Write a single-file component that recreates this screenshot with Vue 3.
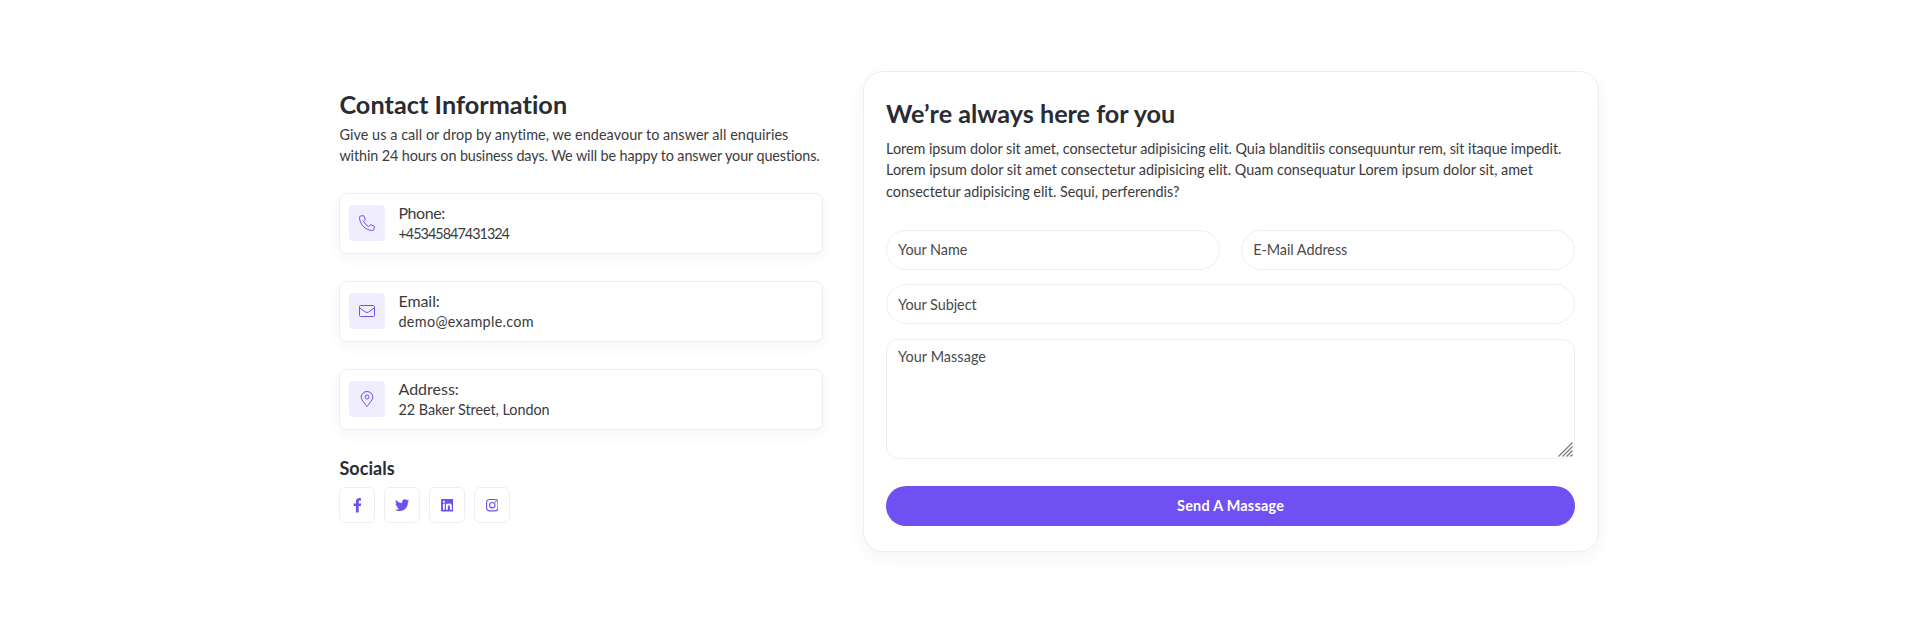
<script setup>
const contacts = [
  { icon: 'phone', label: 'Phone:', value: '+45345847431324' },
  { icon: 'email', label: 'Email:', value: 'demo@example.com' },
  { icon: 'address', label: 'Address:', value: '22 Baker Street, London' },
]

const socials = [
  {
    name: 'facebook',
    box: '0 0 320 512',
    path: 'M279.14 288l14.22-92.66h-88.91v-60.13c0-25.35 12.42-50.06 52.24-50.06h40.42V6.26S260.43 0 225.36 0c-73.22 0-121.08 44.38-121.08 124.72v70.62H22.89V288h81.39v224h100.17V288z',
  },
  {
    name: 'twitter',
    box: '0 0 512 512',
    path: 'M459.37 151.716c.325 4.548.325 9.097.325 13.645 0 138.72-105.583 298.558-298.558 298.558-59.452 0-114.68-17.219-161.137-47.106 8.447.974 16.568 1.299 25.34 1.299 49.055 0 94.213-16.568 130.274-44.832-46.132-.975-84.792-31.188-98.112-72.772 6.498.974 12.995 1.624 19.818 1.624 9.421 0 18.843-1.3 27.614-3.573-48.081-9.747-84.143-51.98-84.143-102.985v-1.299c13.969 7.797 30.214 12.67 47.431 13.319-28.264-18.843-46.781-51.005-46.781-87.391 0-19.492 5.197-37.36 14.294-52.954 51.655 63.675 129.3 105.258 216.365 109.807-1.624-7.797-2.599-15.918-2.599-24.04 0-57.828 46.782-104.934 104.934-104.934 30.213 0 57.502 12.67 76.67 33.137 23.715-4.548 46.456-13.32 66.599-25.34-7.798 24.366-24.366 44.833-46.132 57.827 21.117-2.273 41.584-8.122 60.426-16.243-14.292 20.791-32.161 39.308-52.628 54.253z',
  },
  {
    name: 'linkedin',
    box: '0 0 448 512',
    path: 'M416 32H31.9C14.3 32 0 46.5 0 64.3v383.4C0 465.5 14.3 480 31.9 480H416c17.6 0 32-14.5 32-32.3V64.3c0-17.8-14.4-32.3-32-32.3zM135.4 416H69V202.2h66.5V416zm-33.2-243c-21.3 0-38.5-17.3-38.5-38.5S80.9 96 102.2 96c21.2 0 38.5 17.3 38.5 38.5 0 21.3-17.2 38.5-38.5 38.5zm282.1 243h-66.4V312c0-24.8-.5-56.7-34.5-56.7-34.6 0-39.9 27-39.9 54.9V416h-66.4V202.2h63.7v29.2h.9c8.9-16.8 30.6-34.5 62.9-34.5 67.2 0 79.7 44.3 79.7 101.9V416z',
  },
  { name: 'instagram', box: '0 0 448 512' },
]
</script>

<template>
  <main class="page">
    <section class="info">
      <h2 class="title info-title">Contact Information</h2>
      <p class="text">
        <span class="line i1">Give us a call or drop by anytime, we endeavour to answer all enquiries</span>
        <span class="line i2">within 24 hours on business days. We will be happy to answer your questions.</span>
      </p>
      <div class="contacts">
        <div v-for="c in contacts" :key="c.icon" class="contact">
          <div class="badge">
            <svg v-if="c.icon === 'phone'" class="line-icon" viewBox="0 0 16 16">
              <path d="M4 .6 1.3 1.2Q.5 1.4 .5 2.2C.5 9.5 6.5 15.5 13.8 15.5Q14.6 15.5 14.8 14.7L15.4 12Q15.6 11.3 14.9 11L11.9 9.8Q11.3 9.6 10.9 10.1L9.7 11.6Q6.2 9.9 4.4 6.3L5.9 5.1Q6.4 4.7 6.2 4.1L5 1.1Q4.7 .5 4 .6Z" />
            </svg>
            <svg v-else-if="c.icon === 'email'" class="line-icon" viewBox="0 0 16 16">
              <rect x=".5" y="2.5" width="15" height="11" rx="1" />
              <path d="M.5 4.8 6.4 9Q8 10 9.6 9L15.5 4.8" />
            </svg>
            <svg v-else class="line-icon" viewBox="0 0 16 16">
              <path d="M8 15.5C6 12.9 2.2 8.7 2.2 6.2a5.8 5.7 0 0 1 11.6 0C13.8 8.7 10 12.9 8 15.5Z" />
              <circle cx="8" cy="6" r="2" />
            </svg>
          </div>
          <div class="detail">
            <div class="label" :class="c.icon">{{ c.label }}</div>
            <div class="value" :class="c.icon">{{ c.value }}</div>
          </div>
        </div>
      </div>
      <h3 class="subtitle">Socials</h3>
      <div class="socials">
        <a v-for="s in socials" :key="s.name" class="social">
          <svg :viewBox="s.box" class="brand">
            <path v-if="s.path" :d="s.path" />
            <template v-else>
              <rect class="ring" x="20" y="52" width="408" height="408" rx="112" />
              <circle class="ring" cx="224" cy="256" r="95" />
              <circle cx="343" cy="137" r="27" />
            </template>
          </svg>
        </a>
      </div>
    </section>

    <section class="panel">
      <h2 class="title panel-title">We’re always here for you</h2>
      <p class="text">
        <span class="line p1">Lorem ipsum dolor sit amet, consectetur adipisicing elit. Quia blanditiis consequuntur rem, sit itaque impedit.</span>
        <span class="line p2">Lorem ipsum dolor sit amet consectetur adipisicing elit. Quam consequatur Lorem ipsum dolor sit, amet</span>
        <span class="line p3">consectetur adipisicing elit. Sequi, perferendis?</span>
      </p>
      <form class="form" @submit.prevent>
        <div class="pair">
          <input class="field" type="text" placeholder="Your Name" />
          <input class="field" type="text" placeholder="E-Mail Address" />
        </div>
        <input class="field" type="text" placeholder="Your Subject" />
        <div class="area-wrap">
          <textarea class="field area" placeholder="Your Massage"></textarea>
          <svg class="grip" viewBox="0 0 15 15">
            <path d="M.5 14.5 14.5 .5M4.5 14.5l10-10M8.5 14.5l6-6M12.5 14.5l2-2" />
          </svg>
        </div>
        <button class="send" type="submit">Send A Massage</button>
      </form>
    </section>
  </main>
</template>

<style>
body {
  margin: 0;
  background: #fff;
}
</style>

<style scoped>
.page {
  box-sizing: border-box;
  height: 625px;
  display: grid;
  grid-template-columns: 483.4px 736.4px;
  column-gap: 40px;
  align-items: start;
  padding: 71px 0 0 339.4px;
  font-family: Lato, "Open Sans", sans-serif;
  font-size: 14.4px;
  line-height: 21.6px;
  font-variant-ligatures: none;
  color: #3b3b3d;
  overflow: hidden;
}
.title {
  margin: 0;
  font-size: 25.2px;
  line-height: 31px;
  font-weight: 700;
  color: #292c33;
  white-space: nowrap;
}
.info { padding-top: 17.5px; }
.info-title { letter-spacing: .06px; }
.panel-title { letter-spacing: 0; }
.text { margin: 4px 0 0; }
.line { display: block; white-space: nowrap; }
.i1 { letter-spacing: .055px; }
.i2 { letter-spacing: -.115px; }
.p1 { letter-spacing: -.047px; }
.p2 { letter-spacing: -.002px; }
.p3 { letter-spacing: -.01px; }

.contacts {
  display: flex;
  flex-direction: column;
  gap: 27.6px;
  margin-top: 26.5px;
}
.contact {
  box-sizing: border-box;
  height: 60.4px;
  display: flex;
  align-items: center;
  gap: 13.6px;
  padding: 0 8.5px;
  border: 1px solid #ededf8;
  border-radius: 8px;
  background: #fff;
  box-shadow: 0 5px 14px rgba(30, 50, 70, .045);
}
.badge {
  width: 36px;
  height: 36px;
  display: grid;
  place-items: center;
  margin-top: -.4px;
  border-radius: 4px;
  background: #f0edfe;
}
.line-icon {
  display: block;
  width: 16px;
  height: 16px;
  fill: none;
  stroke: #6f50f3;
  stroke-width: 1;
  stroke-linejoin: round;
}
.detail { margin-top: -.8px; }
.label { font-size: 16px; line-height: 21.6px; }
.value { margin-top: -.8px; }
.label.phone { letter-spacing: -.45px; }
.label.email { letter-spacing: -.08px; }
.value.phone { letter-spacing: -.98px; }
.value.email { letter-spacing: .31px; }
.value.address { letter-spacing: -.04px; }

.subtitle {
  margin: 25px 0 5.8px;
  font-size: 18px;
  line-height: 27px;
  font-weight: 700;
  letter-spacing: .05px;
  color: #292c33;
}
.socials { display: flex; gap: 9px; margin-left: -.4px; }
.social {
  box-sizing: border-box;
  width: 36px;
  height: 36px;
  display: grid;
  place-items: center;
  border: 1px solid #ededf8;
  border-radius: 6px;
}
.brand { display: block; height: 14.4px; fill: #6f50f3; }
.ring { fill: none; stroke: #6f50f3; stroke-width: 40; }

.panel {
  box-sizing: border-box;
  height: 481px;
  padding: 26px 23px 0 22.3px;
  border: 1px solid #ededf5;
  border-radius: 20px;
  background: #fff;
  box-shadow: 0 6px 18px rgba(30, 50, 70, .05);
}
.panel .text { margin-top: 8.7px; }
.form {
  display: flex;
  flex-direction: column;
  gap: 14.5px;
  margin-top: 27.4px;
}
.pair { display: grid; grid-template-columns: 1fr 1fr; gap: 21px; }
.field {
  box-sizing: border-box;
  width: 100%;
  height: 40px;
  display: block;
  margin: 0;
  padding: 0 11px;
  border: 1px solid #ededf8;
  border-radius: 20px;
  outline: none;
  background: #fff;
  font: inherit;
  letter-spacing: -.04px;
}
.field::placeholder { color: #4a4a4c; opacity: 1; }
.area-wrap { position: relative; height: 120px; }
.area {
  height: 120px;
  padding-top: 6px;
  border-radius: 12px;
  resize: none;
  letter-spacing: .07px;
}
.grip {
  position: absolute;
  right: 2px;
  bottom: 2px;
  width: 15px;
  height: 15px;
  fill: none;
  stroke: #777;
  stroke-width: 1.2;
}
.send {
  height: 40px;
  margin-top: 12.3px;
  padding: 0;
  border: 0;
  border-radius: 20px;
  background: #6f50f3;
  color: #fff;
  font: inherit;
  font-weight: 700;
  letter-spacing: .25px;
}
</style>
